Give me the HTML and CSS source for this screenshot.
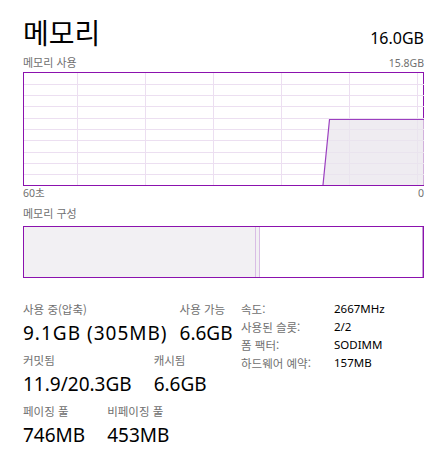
FILE: index.html
```html
<!DOCTYPE html>
<html lang="ko">
<head>
<meta charset="utf-8">
<link rel="stylesheet" href="styles.css">
</head>
<body>
<div class="page">
  <div class="header">
    <div class="title">메모리</div>
    <div class="total">16.0GB</div>
  </div>
  <div class="caption-row">
    <span>메모리 사용</span>
    <span class="small-num">15.8GB</span>
  </div>
  <div class="graph">
    <svg width="400" height="112" viewBox="0 0 400 112">
      <g stroke="#ecdff1" stroke-width="1">
        <line x1="53.5" y1="0" x2="53.5" y2="112"/>
        <line x1="121.5" y1="0" x2="121.5" y2="112"/>
        <line x1="189.5" y1="0" x2="189.5" y2="112"/>
        <line x1="257.5" y1="0" x2="257.5" y2="112"/>
        <line x1="325.5" y1="0" x2="325.5" y2="112"/>
        <line x1="393.5" y1="0" x2="393.5" y2="112"/>
        <line x1="0" y1="11.5" x2="400" y2="11.5"/>
        <line x1="0" y1="22.5" x2="400" y2="22.5"/>
        <line x1="0" y1="33.5" x2="400" y2="33.5"/>
        <line x1="0" y1="45.5" x2="400" y2="45.5"/>
        <line x1="0" y1="56.5" x2="400" y2="56.5"/>
        <line x1="0" y1="67.5" x2="400" y2="67.5"/>
        <line x1="0" y1="79.5" x2="400" y2="79.5"/>
        <line x1="0" y1="90.5" x2="400" y2="90.5"/>
        <line x1="0" y1="101.5" x2="400" y2="101.5"/>
      </g>
      <polygon points="299,112 305.5,46.5 400,46.5 400,112" fill="#e9e5ec" fill-opacity="0.75"/>
      <polyline points="299,112 305.5,46.5 400,46.5" fill="none" stroke="#9b3fc0" stroke-width="1.2"/>
    </svg>
  </div>
  <div class="axis-row">
    <span>60초</span>
    <span>0</span>
  </div>
  <div class="caption-row second">
    <span>메모리 구성</span>
  </div>
  <div class="composition">
    <div class="used"></div>
    <div class="modified"></div>
    <div class="free"></div>
  </div>
  <div class="stats">
    <div class="stats-left">
      <div class="stat-row tight">
        <div class="stat"><div class="label">사용 중(압축)</div><div class="value wide">9.1GB (305MB)</div></div>
        <div class="stat"><div class="label">사용 가능</div><div class="value">6.6GB</div></div>
      </div>
      <div class="stat-row">
        <div class="stat"><div class="label">커밋됨</div><div class="value">11.9/20.3GB</div></div>
        <div class="stat"><div class="label">캐시됨</div><div class="value">6.6GB</div></div>
      </div>
      <div class="stat-row">
        <div class="stat"><div class="label">페이징 풀</div><div class="value">746MB</div></div>
        <div class="stat"><div class="label">비페이징 풀</div><div class="value">453MB</div></div>
      </div>
    </div>
    <dl class="props">
      <dt>속도:</dt><dd>2667MHz</dd>
      <dt>사용된 슬롯:</dt><dd>2/2</dd>
      <dt>폼 팩터:</dt><dd>SODIMM</dd>
      <dt>하드웨어 예약:</dt><dd>157MB</dd>
    </dl>
  </div>
</div>
</body>
</html>
```

FILE: styles.css
```css
body {
  margin: 0;
  background: #ffffff;
  font-family: "Noto Sans", "Noto Sans CJK KR", sans-serif;
  color: #000000;
}

.page {
  width: 401px;
  padding: 12px 0 0 23px;
}

.header {
  display: flex;
  justify-content: space-between;
  align-items: baseline;
  height: 40px;
}

.title {
  font-family: "Noto Sans CJK KR", sans-serif;
  font-size: 28px;
  line-height: 40px;
}

.total {
  font-size: 16px;
  line-height: 20px;
}

.caption-row {
  display: flex;
  justify-content: space-between;
  align-items: baseline;
  font-family: "Noto Sans CJK KR", "Noto Sans", sans-serif;
  font-size: 11px;
  line-height: 20px;
  height: 20px;
  color: #707070;
}

.caption-row .small-num {
  font-family: "Noto Sans", sans-serif;
  font-size: 10.5px;
}

.caption-row.second {
  height: 22px;
}

.graph {
  border: 1px solid #8b12ae;
  height: 112px;
  line-height: 0;
}

.graph svg {
  display: block;
}

.axis-row {
  display: flex;
  justify-content: space-between;
  font-family: "Noto Sans", "Noto Sans CJK KR", sans-serif;
  font-size: 10.5px;
  line-height: 14px;
  height: 17px;
  color: #707070;
}

.composition {
  display: flex;
  border: 1px solid #8b12ae;
  height: 50px;
  margin-top: 1px;
}

.composition .used {
  width: 231px;
  background: #f2f0f3;
}

.composition .modified {
  width: 3px;
  background: #f2f0f3;
  border-left: 1px solid #d9bde5;
  border-right: 1px solid #d9bde5;
}

.composition .free {
  flex: 1;
  background: #ffffff;
  border-right: 1px solid #c69ad6;
}

.stats {
  display: flex;
  margin-top: 22px;
}

.stats-left {
  width: 218px;
}

.stat-row {
  display: flex;
  gap: 22px;
  height: 51px;
}

.stat-row.tight {
  gap: 12px;
}

.label {
  font-family: "Noto Sans CJK KR", sans-serif;
  font-size: 11.5px;
  line-height: 18px;
  color: #707070;
}

.value {
  font-size: 19px;
  line-height: 30px;
  white-space: nowrap;
}

.value.wide {
  letter-spacing: 1px;
}

.props {
  display: grid;
  grid-template-columns: 93px auto;
  grid-auto-rows: 18px;
  margin: 0;
  font-family: "Noto Sans", "Noto Sans CJK KR", sans-serif;
  font-size: 11.5px;
  line-height: 18px;
}

.props dt {
  color: #707070;
  font-family: "Noto Sans CJK KR", sans-serif;
}

.props dd {
  margin: 0;
}
```
